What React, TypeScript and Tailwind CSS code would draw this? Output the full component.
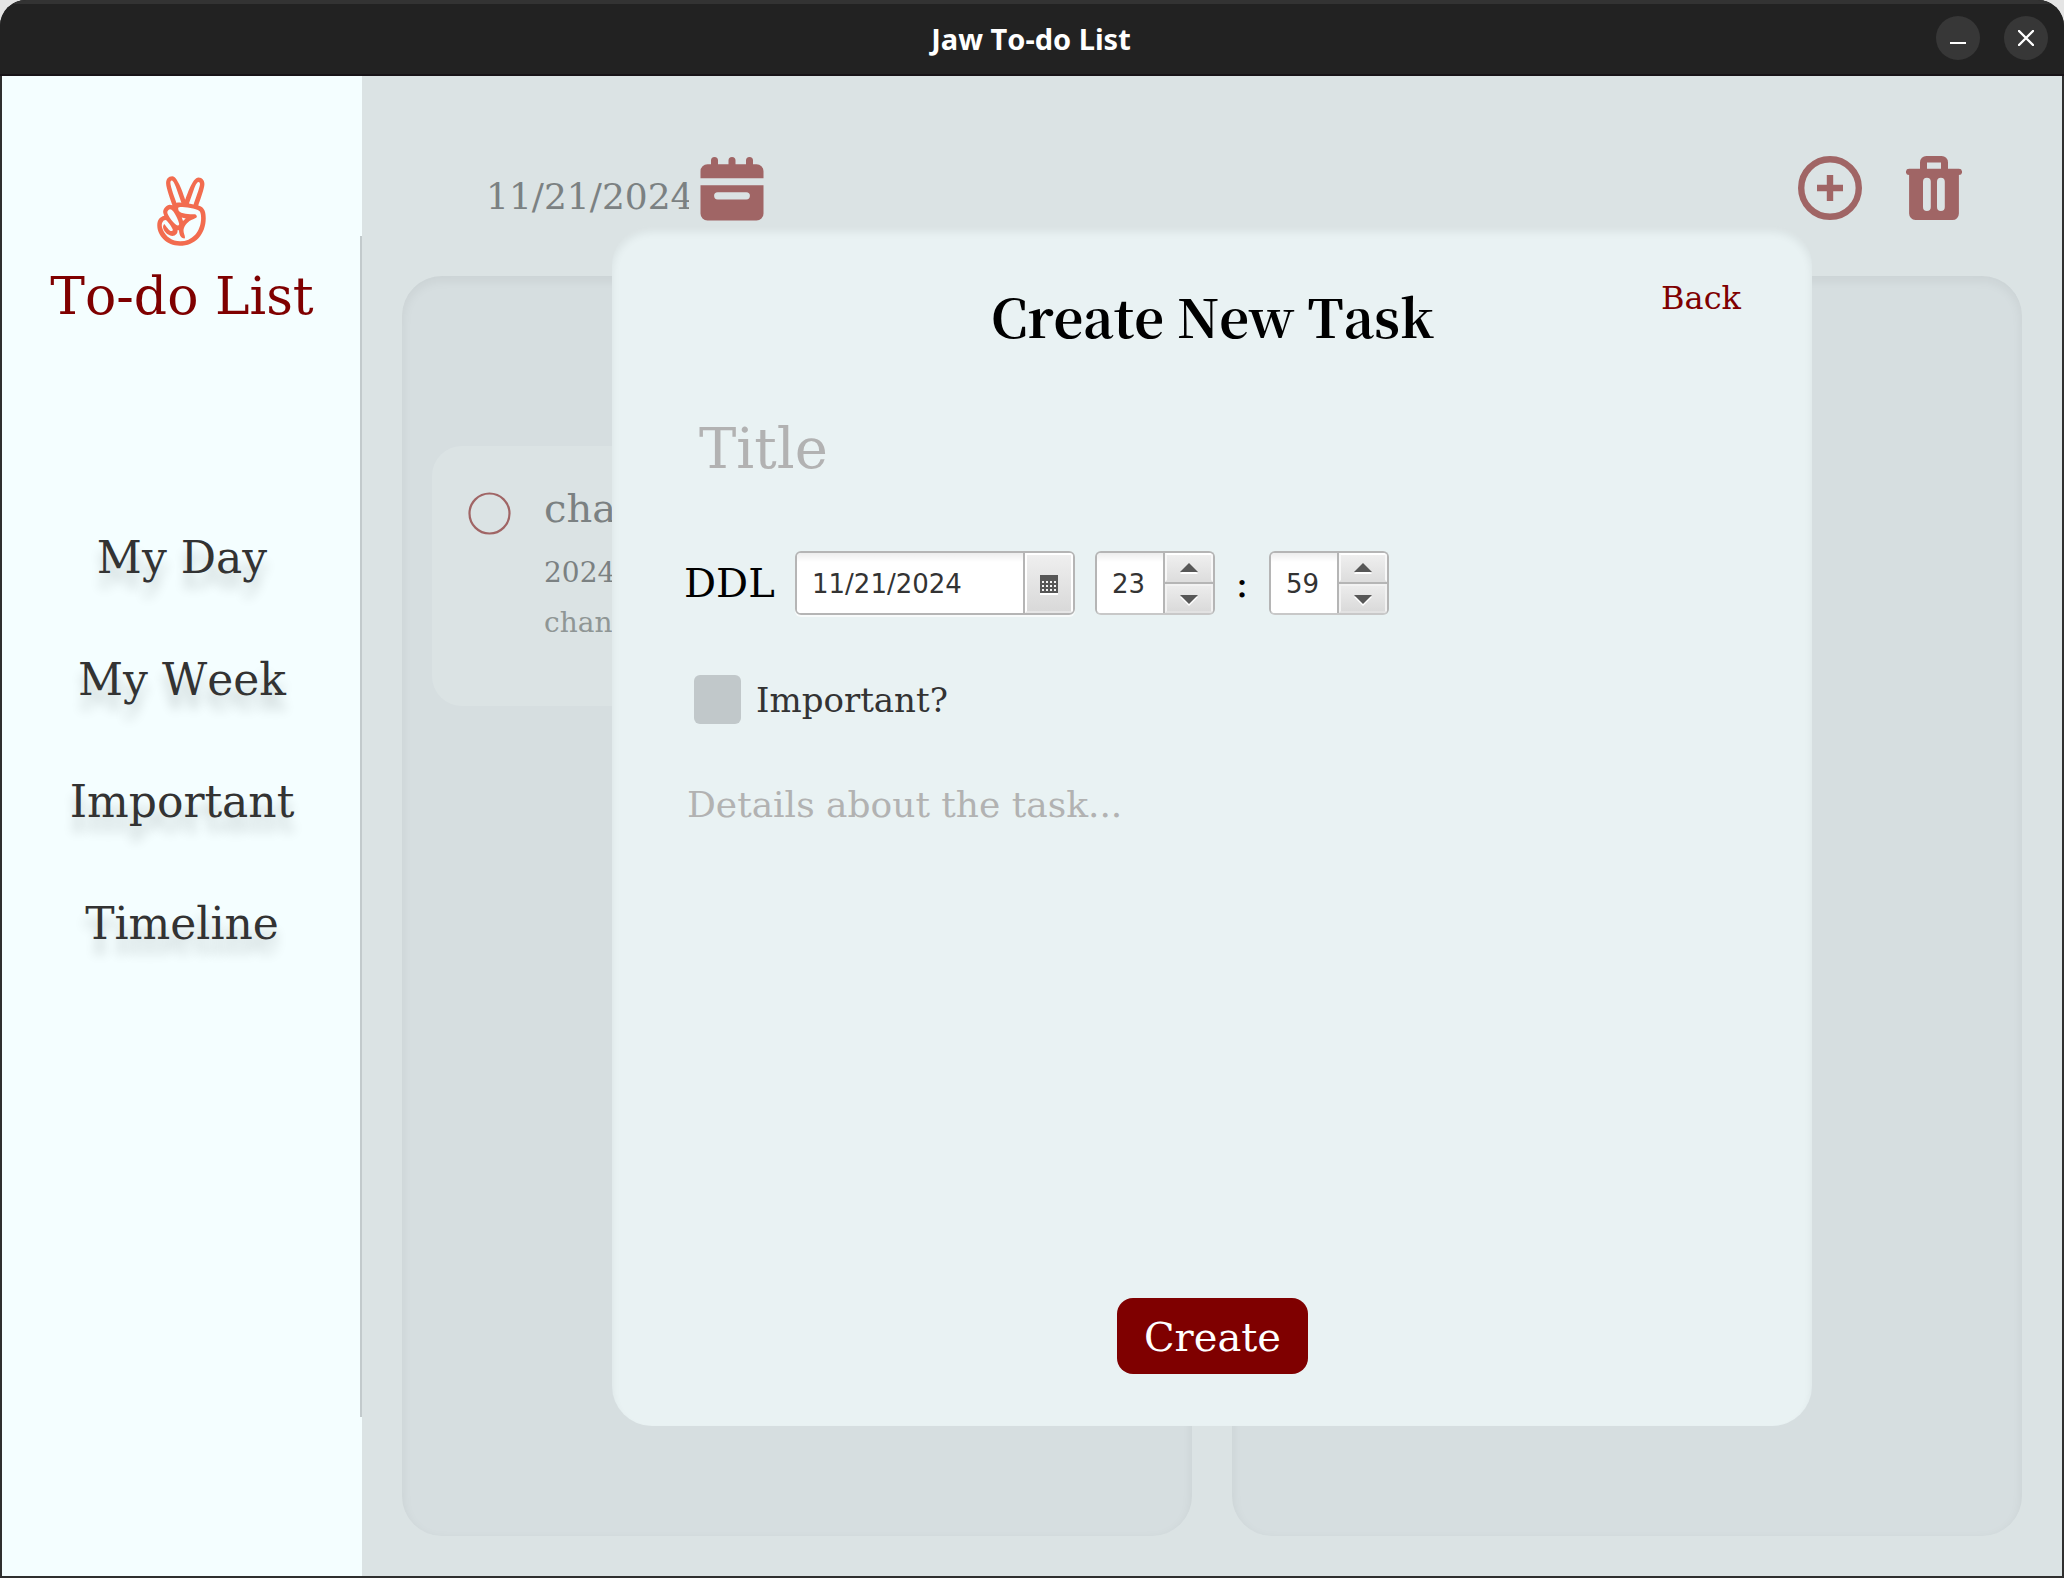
import React from "react";
import { FaAngellist } from "react-icons/fa";

const NAV = ["My Day", "My Week", "Important", "Timeline"];

function CalendarIcon() {
  return (
    <svg width="64" height="64" viewBox="0 0 64 64" fill="#a06565">
      <path d="M0.500 21.3v-7a7 7 0 0 1 7-7h3.500V3.5a3.5 3.5 0 0 1 7 0v3.8h10.5V3.5a3.5 3.5 0 0 1 7 0v3.8H46V3.5a3.5 3.5 0 0 1 7 0v3.8h3.500a7 7 0 0 1 7 7v7z" />
      <path
        fillRule="evenodd"
        d="M0.500 28.3h63V56.500a7 7 0 0 1-7 7H7.500a7 7 0 0 1-7-7zM17.7 35.2a3.6 3.6 0 0 0 0 7.2h28.6a3.6 3.6 0 0 0 0-7.2z"
      />
    </svg>
  );
}

function PlusIcon() {
  return (
    <svg width="64" height="64" viewBox="0 0 64 64" fill="none" stroke="#a06565" strokeWidth="6.4">
      <circle cx="32" cy="32" r="28.8" />
      <path d="M19 32h26M32 19v26" />
    </svg>
  );
}

function TrashIcon() {
  return (
    <svg width="56" height="64" viewBox="0 0 56 64" fill="#a06565">
      <path
        fillRule="evenodd"
        d="M14 12.8V6.4A6.4 6.4 0 0 1 20.400 0h15.200A6.400 6.400 0 0 1 42 6.400v6.400h10.900a3.150 3.150 0 0 1 0 6.300V57.600a6.400 6.400 0 0 1-6.400 6.400H9.400A6.400 6.400 0 0 1 3.100 57.600V19.100a3.150 3.150 0 0 1 0-6.300zM21 12.800h14V6.400H21zM17 25.700v25.300a3.900 3.900 0 0 0 7.800 0V25.700a3.900 3.900 0 0 0-7.800 0zM31 25.700v25.300a3.900 3.900 0 0 0 7.800 0V25.700a3.900 3.900 0 0 0-7.800 0z"
      />
    </svg>
  );
}

function GridIcon() {
  const cols = [2, 6, 10, 14];
  const rows = [6, 10, 14];
  return (
    <svg width="18" height="20" viewBox="0 0 18 20" className="mt-1">
      <rect y="2" width="18" height="18" fill="#fff" />
      <rect width="18" height="18" fill="#575757" />
      {rows.map((y) => cols.map((x) => <rect key={`${x}-${y}`} x={x} y={y} width="2" height="2" fill="#f4f4f4" />))}
    </svg>
  );
}

function Arrow({ down = false }: { down?: boolean }) {
  const d = down ? "M0 0h18L9 9z" : "M0 9h18L9 0z";
  return (
    <svg width="18" height="11" viewBox="0 0 18 11" className={down ? "mt-[3px]" : "mt-px"}>
      <path d={d} fill="#fff" transform="translate(0 2)" />
      <path d={d} fill="#575757" />
    </svg>
  );
}

function Spinner({ value }: { value: string }) {
  return (
    <div className="flex h-16 w-[120px] overflow-hidden rounded-md border-2 border-[#b5b5b5] border-b-[#c8c8c8] bg-white">
      <div className="flex flex-1 items-center bg-linear-to-b from-[#ededed] to-white to-15% pt-0.5 pl-[15px]">
        {value}
      </div>
      <div className="-mb-0.5 flex w-[50px] flex-col border-b-2 border-l-2 border-[#b5b5b5]">
        <div className="flex h-[30px] items-center justify-center border-2 border-t-white border-l-[#f8f8f8] border-r-[#f8f8f8] border-b-[#dedede] bg-linear-to-b from-[#efefef] to-[#dedede]">
          <Arrow />
        </div>
        <div className="flex h-8 items-center justify-center border-t-2 border-[#b5b5b5]">
          <div className="flex h-full w-full items-center justify-center border-2 border-[#f2f2f2] border-b-[#e2e2e2] bg-linear-to-b from-[#ececec] to-[#dadada]">
            <Arrow down />
          </div>
        </div>
      </div>
    </div>
  );
}

function TitleBar() {
  return (
    <header className="grid h-[76px] shrink-0 grid-cols-[1fr_auto_1fr] items-center border-t-4 border-b-2 border-t-[#333333] border-b-[#171317] bg-[#222222]">
      <span />
      <h1 className="-ml-0.5 font-['Noto_Sans',sans-serif] text-[29px] leading-10 font-bold text-white">
        Jaw To-do List
      </h1>
      <div className="flex justify-end gap-6 pr-4 pb-0.5">
        <button className="flex size-11 items-center justify-center rounded-full bg-[#373737]">
          <svg width="16" height="16" viewBox="0 0 16 16" stroke="#fff" strokeWidth="2">
            <path d="M0 13h16" />
          </svg>
        </button>
        <button className="flex size-11 items-center justify-center rounded-full bg-[#373737]">
          <svg width="16" height="16" viewBox="0 0 16 16" stroke="#fff" strokeWidth="2.400" strokeLinecap="round">
            <path d="M1 1l14 14M15 1L1 15" />
          </svg>
        </button>
      </div>
    </header>
  );
}

function Sidebar() {
  return (
    <aside className="flex w-[360px] shrink-0 bg-[#f4feff]">
      <div className="flex flex-1 flex-col items-center pt-[100px] pl-0.5">
        <FaAngellist className="mr-px h-[70px] w-[61px] text-[#f26c4f]" />
        <div className="mt-5 text-[52px] leading-[60px] whitespace-nowrap text-[#7f0000]">To-do List</div>
        <nav className="mt-[202px] flex flex-col items-center gap-[62px] text-[44px] leading-[60px] text-[#333333] [text-shadow:0_14px_12px_rgb(0_0_0/0.2)]">
          {NAV.map((item) => (
            <a key={item}>{item}</a>
          ))}
        </nav>
      </div>
      <div className="mt-40 h-[1181px] w-0.5 bg-[#c2cacc]" />
    </aside>
  );
}

const PANEL = "flex-1 rounded-[40px] bg-[#d6dee0] shadow-[inset_0_4px_12px_rgb(0_0_0/0.06)]";

function Board() {
  return (
    <>
      <div className="flex h-[200px] shrink-0 items-start justify-between pt-20 pr-[100px] pl-[124px]">
        <div className="flex">
          <div className="mt-[19px] w-[203px] overflow-hidden text-[36px] leading-[44px] text-[#7b8182]">11/21/2024</div>
          <div className="mt-px ml-[11px]">
            <CalendarIcon />
          </div>
        </div>
        <div className="flex gap-11">
          <PlusIcon />
          <TrashIcon />
        </div>
      </div>
      <div className="flex flex-1 gap-10 px-10 pb-10">
        <section className={PANEL}>
          <article className="mx-[30px] mt-[170px] flex h-[260px] rounded-[30px] bg-[#dbe3e4] pt-[38px] pl-9">
            <svg width="43" height="43" viewBox="0 0 43 43" className="mt-2 shrink-0">
              <circle cx="21.5" cy="21.5" r="20" fill="none" stroke="#a06565" strokeWidth="2.200" />
            </svg>
            <div className="ml-[33px] text-[#7b8182]">
              <div className="text-[40px] leading-[48px]">cha</div>
              <div className="mt-4 text-[28px] leading-[50px]">2024</div>
              <div className="text-[28px] leading-[50px] text-[#8f9695]">chan</div>
            </div>
          </article>
        </section>
        <section className={PANEL} />
      </div>
    </>
  );
}

function CreateTask() {
  return (
    <div className="absolute inset-0 flex items-center justify-center">
      <div className="flex size-[1200px] flex-col rounded-[40px] bg-[#e9f2f3] pl-[72px] shadow-[inset_0_6px_9px_rgb(0_0_0/0.065)]">
        <div className="mr-[71px] grid h-[130px] grid-cols-[1fr_auto_1fr] pt-[52px]">
          <span />
          <h2 className="pt-0.5 font-['Noto_Serif_CJK_SC','Noto_Serif',serif] text-[52px] leading-[72px] font-bold text-black">
            Create New Task
          </h2>
          <button className="h-10 justify-self-end text-[32px] leading-10 text-[#7f0000]">Back</button>
        </div>
        <div className="mt-[59px] pl-[15px] text-[56px] leading-[68px] text-[#b2b2b2]">Title</div>
        <div className="mt-[68px] flex h-16 items-center">
          <div className="w-[111px] text-[40px] text-black">DDL</div>
          <div className="flex h-16 w-[280px] overflow-hidden rounded-md border-2 border-[#b5b5b5] bg-white font-['DejaVu_Sans',sans-serif] text-[26px] text-[#333333] shadow-[0_2px_0_#f8fbfb]">
            <div className="flex flex-1 items-center bg-linear-to-b from-[#ededed] to-white to-15% pt-0.5 pl-[15px]">
              11/21/2024
            </div>
            <div className="flex w-[50px] items-center justify-center border-l-2 border-[#b5b5b5]">
              <div className="flex h-full w-full items-center justify-center border-2 border-white border-b-[#e6e6e6] bg-linear-to-b from-[#efefef] to-[#d9d9d9]">
                <GridIcon />
              </div>
            </div>
          </div>
          <div className="ml-5 flex items-center font-['DejaVu_Sans',sans-serif] text-[26px] text-[#333333]">
            <Spinner value="23" />
            <span className="w-[54px] text-center font-['DejaVu_Serif',serif] text-[40px] text-black">:</span>
            <Spinner value="59" />
          </div>
        </div>
        <label className="mt-[60px] ml-2.5 flex h-[49px] items-center">
          <span className="h-[49px] w-[47px] rounded-md bg-[#c1c8ca]" />
          <span className="pt-px pl-[15px] text-[34px] text-[#333333]">Important?</span>
        </label>
        <div className="mt-[57px] ml-[3px] text-[36px] leading-[48px] text-[#b2b2b2]">Details about the task...</div>
        <button className="mt-auto mr-[72px] mb-[52px] flex h-[76px] w-[191px] items-center justify-center self-center rounded-2xl bg-[#7f0000] pt-px pl-px text-[40px] text-white">
          Create
        </button>
      </div>
    </div>
  );
}

export default function App() {
  return (
    <div className="h-[1578px] w-[2064px] bg-[#e4e4e4] font-['DejaVu_Serif',serif] [font-kerning:none]">
      <div className="flex h-full flex-col overflow-hidden rounded-t-[26px] bg-[#2f2f2f]">
        <TitleBar />
        <div className="mx-0.5 mb-0.5 flex flex-1">
          <Sidebar />
          <main className="relative flex flex-1 flex-col bg-[#dbe3e4]">
            <Board />
            <CreateTask />
          </main>
        </div>
      </div>
    </div>
  );
}
